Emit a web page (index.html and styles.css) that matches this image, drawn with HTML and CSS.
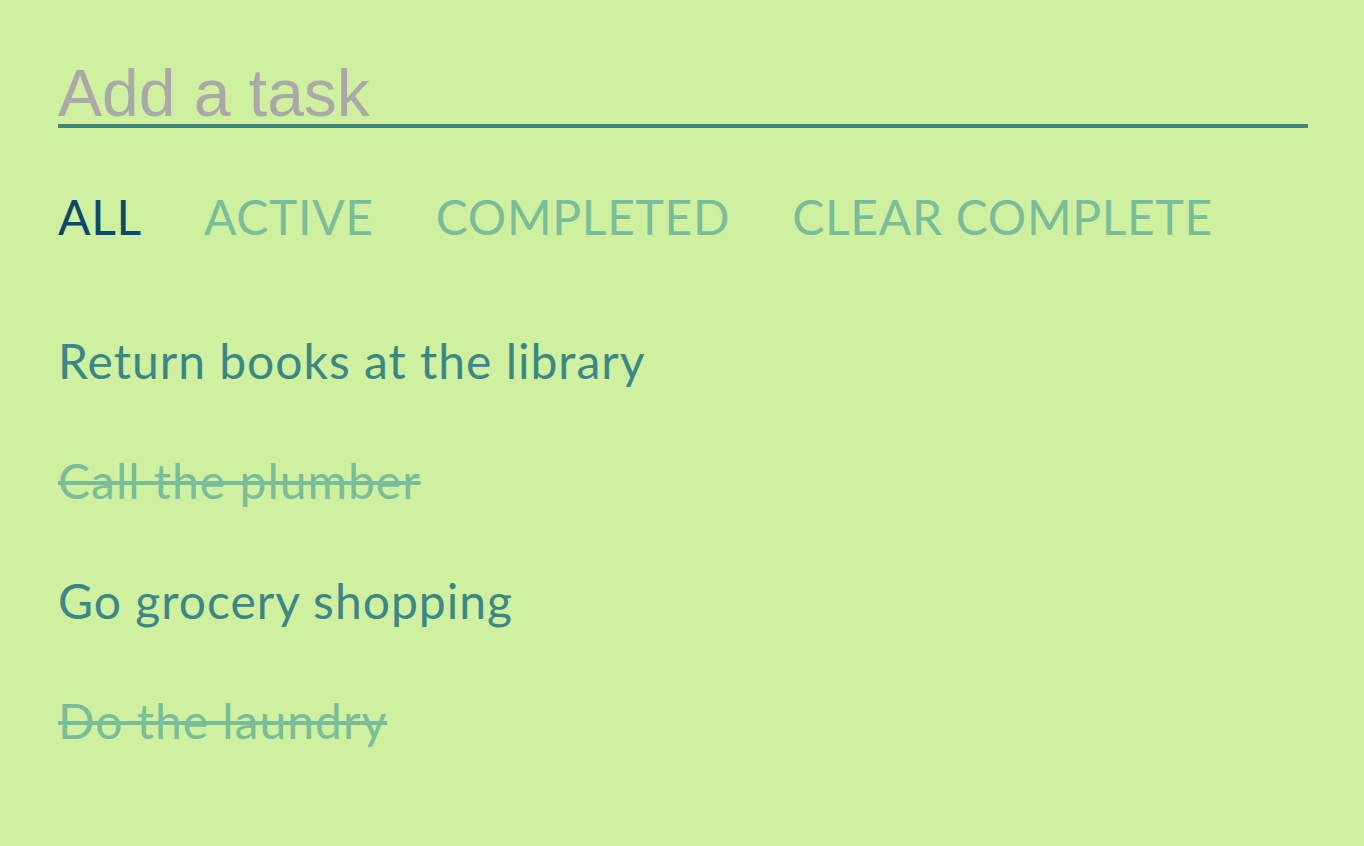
FILE: index.html
```html
<!DOCTYPE html>
<html lang="en">
<head>
<meta charset="utf-8">
<title>Todo</title>
<link rel="stylesheet" href="styles.css">
</head>
<body>
<main class="app">
  <input class="new-task" type="text" placeholder="Add a task">
  <nav class="filters">
    <a class="filter is-current">ALL</a>
    <a class="filter">ACTIVE</a>
    <a class="filter">COMPLETED</a>
    <a class="filter">CLEAR COMPLETE</a>
  </nav>
  <ul class="tasks">
    <li class="task">Return books at the library</li>
    <li class="task is-done">Call the plumber</li>
    <li class="task">Go grocery shopping</li>
    <li class="task is-done">Do the laundry</li>
  </ul>
</main>
</body>
</html>
```
FILE: styles.css
```css
html, body {
  margin: 0;
  padding: 0;
  background: #cff09e;
}
body {
  font-family: Lato, "Open Sans", sans-serif;
  color: #3b8686;
}
.app {
  padding: 0 56px 0 58px;
}
.new-task {
  display: block;
  box-sizing: content-box;
  width: 100%;
  height: 63px;
  margin: 61px 0 0;
  padding: 0;
  border: none;
  border-bottom: 4px solid #3b8686;
  background: transparent;
  font-family: "Liberation Sans", Arial, sans-serif;
  font-size: 66px;
  color: #3b8686;
  outline: none;
}
.new-task::placeholder {
  color: #a9a9a9;
}
.filters {
  display: flex;
  gap: 62px;
  margin-top: 29px;
  line-height: 120px;
  font-size: 48px;
  letter-spacing: 0.7px;
}
.filter {
  color: #79bd9a;
  cursor: pointer;
}
.filter.is-current {
  color: #0b486b;
}
.tasks {
  list-style: none;
  margin: 24px 0 0;
  padding: 0;
  font-size: 48px;
  line-height: 120px;
  letter-spacing: 1px;
}
.task.is-done {
  color: #79bd9a;
  text-decoration: line-through;
}
```
